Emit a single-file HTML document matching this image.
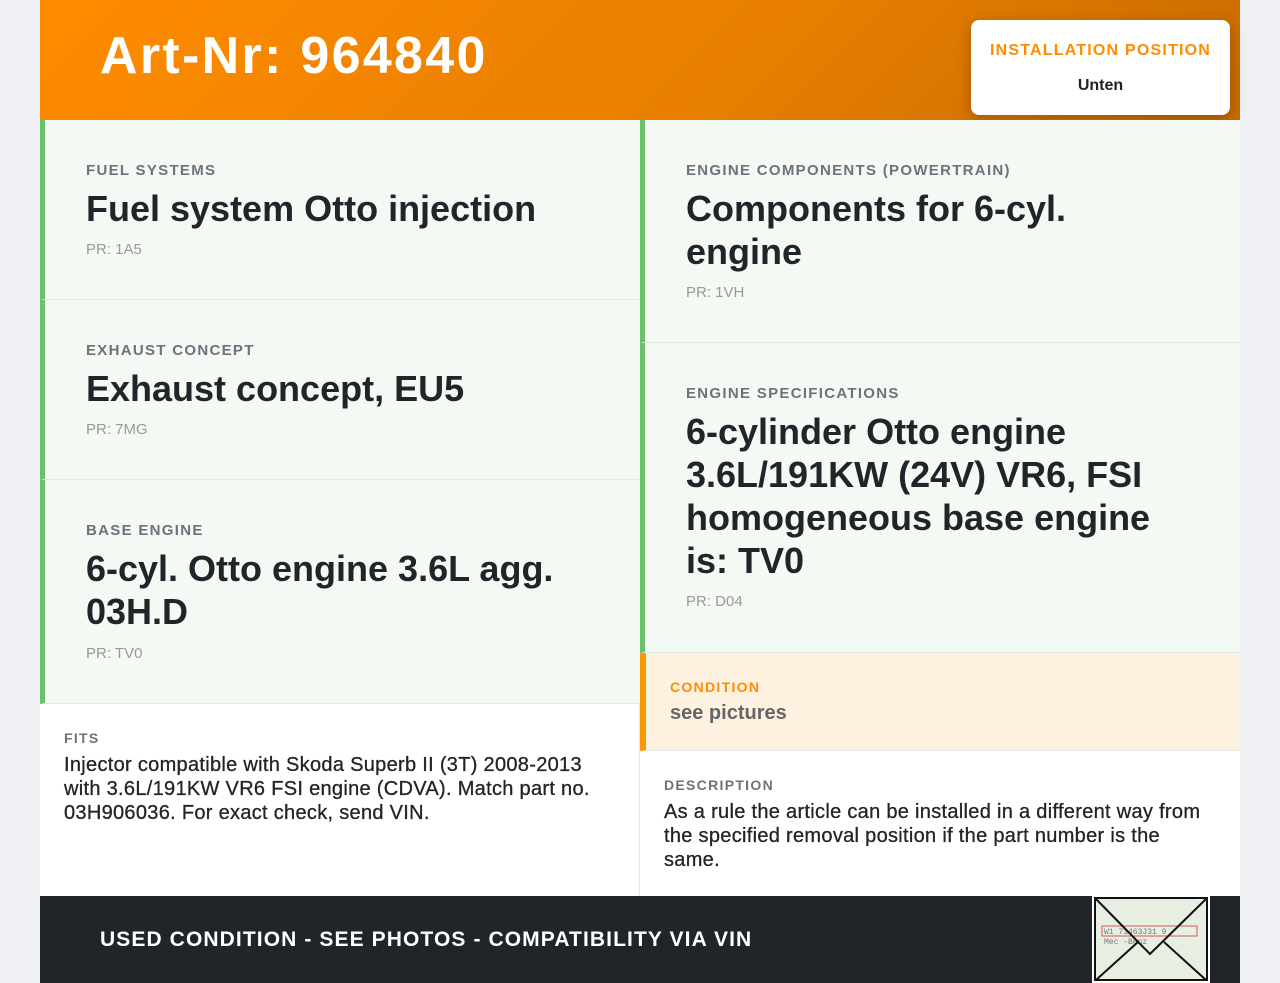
<!DOCTYPE html>
<html><head><meta charset="utf-8"><style>
*{margin:0;padding:0;box-sizing:border-box}
body{width:1280px;height:983px;background:#eef0f3;font-family:"Liberation Sans",sans-serif;position:relative;overflow:hidden}
.wrap{position:absolute;left:40px;top:0;width:1200px;height:983px;background:#fff}
.hdr{position:absolute;left:0;top:0;width:1200px;height:120px;background:linear-gradient(135deg,#ff8c00 0%,#e67e00 60%,#c96a00 100%)}
.hdr h1{position:absolute;left:60px;top:26px;color:#fff;font-size:52px;font-weight:bold;letter-spacing:2.3px}
.ip{position:absolute;left:931px;top:20px;width:259px;height:95px;background:#fff;border-radius:8px;box-shadow:0 4px 14px rgba(0,0,0,.25);text-align:center}
.ip .l{color:#ff8c00;font-size:16px;font-weight:bold;letter-spacing:1.2px;margin-top:22px}
.ip .v{color:#222;font-size:16px;font-weight:bold;margin-top:17px}
.c{position:absolute;background:#f3f9f3;border-left:5px solid #6abf69;border-bottom:1px solid #e3e8e6}
.lab{position:absolute;left:41px;font-size:15px;font-weight:bold;color:#6c737b;letter-spacing:1.3px}
.t{position:absolute;left:41px;font-size:36px;font-weight:bold;color:#212529;line-height:43px;width:520px}
.pr{position:absolute;left:41px;font-size:15px;color:#999}
.w{position:absolute;background:#fff}
.wl{position:absolute;left:24px;font-size:14px;font-weight:bold;color:#6c737b;letter-spacing:1.3px}
.wt{position:absolute;left:24px;font-size:20px;color:#212529;line-height:24px;width:560px;letter-spacing:0.3px;-webkit-text-stroke:0.3px #212529}
.ft{position:absolute;left:0;top:896px;width:1200px;height:87px;background:#212529}
.ft span{position:absolute;left:60px;top:32px;color:#fff;font-size:21px;font-weight:bold;letter-spacing:1.1px}
</style></head><body><div class="wrap">
<div class="hdr"><h1>Art-Nr: 964840</h1>
<div class="ip"><div class="l">INSTALLATION POSITION</div><div class="v">Unten</div></div></div>

<div class="c" style="left:0;top:120px;width:600px;height:180px"><div class="lab" style="top:42px">FUEL SYSTEMS</div><div class="t" style="top:67px">Fuel system Otto injection</div><div class="pr" style="top:121px">PR: 1A5</div></div>
<div class="c" style="left:0;top:300px;width:600px;height:180px"><div class="lab" style="top:42px">EXHAUST CONCEPT</div><div class="t" style="top:67px">Exhaust concept, EU5</div><div class="pr" style="top:121px">PR: 7MG</div></div>
<div class="c" style="left:0;top:480px;width:600px;height:224px"><div class="lab" style="top:42px">BASE ENGINE</div><div class="t" style="top:67px">6-cyl. Otto engine 3.6L agg. 03H.D</div><div class="pr" style="top:165px">PR: TV0</div></div>

<div class="c" style="left:600px;top:120px;width:600px;height:223px"><div class="lab" style="top:42px">ENGINE COMPONENTS (POWERTRAIN)</div><div class="t" style="top:67px;width:470px">Components for 6-cyl. engine</div><div class="pr" style="top:164px">PR: 1VH</div></div>
<div class="c" style="left:600px;top:343px;width:600px;height:310px"><div class="lab" style="top:42px">ENGINE SPECIFICATIONS</div><div class="t" style="top:67px;width:490px">6-cylinder Otto engine 3.6L/191KW (24V) VR6, FSI homogeneous base engine is: TV0</div><div class="pr" style="top:250px">PR: D04</div></div>
<div class="c" style="left:600px;top:653px;width:600px;height:98px;background:#fff1df;border-left:6px solid #ff9800"><div class="lab" style="left:24px;top:26px;color:#ff8c00;font-size:14px">CONDITION</div><div style="position:absolute;left:24px;top:49px;font-size:20px;font-weight:bold;color:#666">see pictures</div></div>

<div class="w" style="left:0;top:704px;width:600px;height:192px;border-right:1px solid #e6e6e6"><div class="wl" style="top:26px">FITS</div><div class="wt" style="top:49px;width:555px">Injector compatible with Skoda Superb II (3T) 2008-2013 with 3.6L/191KW VR6 FSI engine (CDVA). Match part no. 03H906036. For exact check, send VIN.</div></div>
<div class="w" style="left:600px;top:751px;width:600px;height:145px"><div class="wl" style="top:26px">DESCRIPTION</div><div class="wt" style="top:49px;width:548px">As a rule the article can be installed in a different way from the specified removal position if the part number is the same.</div></div>

<div class="ft"><span>USED CONDITION - SEE PHOTOS - COMPATIBILITY VIA VIN</span>
<svg style="position:absolute;left:1052px;top:0" width="118" height="87" viewBox="0 0 118 87"><rect x="0" y="0" width="118" height="87" fill="#fff"/><rect x="3" y="2" width="112" height="82" fill="#e6efe2" stroke="#111" stroke-width="2"/><rect x="10" y="30" width="95" height="10" fill="none" stroke="#d55" stroke-width="1"/><text x="12" y="38" font-size="8" font-family="Liberation Mono" fill="#777">W1 71463J31 9</text><text x="12" y="48" font-size="8" font-family="Liberation Mono" fill="#777">Mec -Benz</text><path d="M4 3 L58 58 L114 3 M4 84 L46 46 M114 84 L72 46" stroke="#111" stroke-width="2" fill="none"/></svg></div>
</div></body></html>
